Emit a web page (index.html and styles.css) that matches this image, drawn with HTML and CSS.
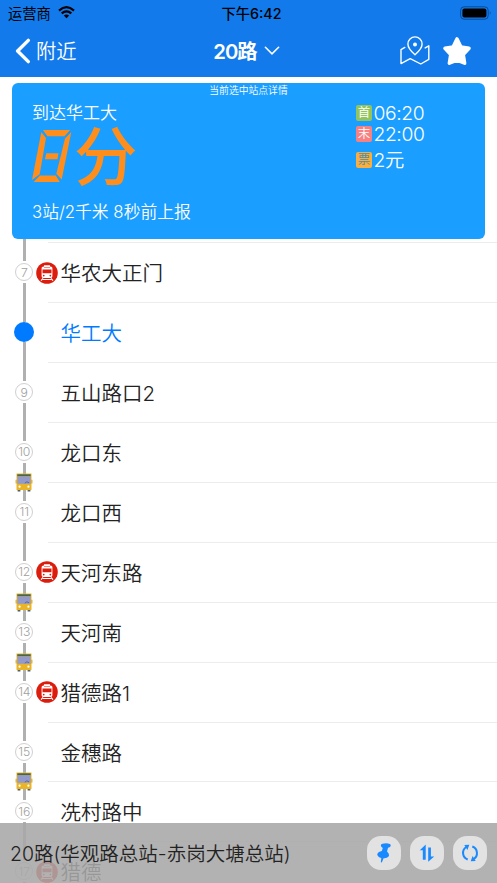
FILE: index.html
```html
<!DOCTYPE html>
<html lang="zh-CN">
<head>
<meta charset="utf-8">
<meta name="viewport" content="width=device-width, initial-scale=1">
<title>20路</title>
<link rel="stylesheet" href="styles.css">
</head>
<body>
<svg width="0" height="0" class="defs" aria-hidden="true">
  <symbol id="metro" viewBox="0 0 22 22">
    <circle cx="11" cy="11" r="10.8" fill="#dc1c0c"/>
    <path fill="#fff" fill-rule="evenodd" d="M8 3.2h6v1.3l1.400.3q1 .4 1 1.500v8q0 1.500-1.400 1.700H7q-1.400-.2-1.400-1.700v-8q0-1.100 1-1.500L8 4.500zM6.500 7.600v3.600h9V7.600zM8 5.400v.7h6v-.7zM7.700 12.800a.8.8 0 1 0 .1 0zM14.300 12.800a.8.8 0 1 0 .1 0z"/>
    <path d="M7 16.300 5 18.600M15 16.300l2 2.300M6.800 17.500h8.400" stroke="#fff" stroke-width="1.1"/>
  </symbol>
  <symbol id="bus" viewBox="0 0 18 19">
    <path fill="#555f68" d="M2.600 15.600h2.800v3H2.600zM12.600 15.600h2.800v3h-2.800z"/>
    <path fill="#e9b526" d="M1.500.5h15v6.300h1v3.600h-1v6.600h-15v-6.600h-1V6.800h1z"/>
    <path fill="#49664d" d="M2.300 1.300h13.400v2H2.300z"/>
    <path fill="#929acb" d="M2.300 3.300h13.400v7.500H2.300z"/>
    <path d="M9.800 10.200q2-2.700 4.200-.4" fill="none" stroke="#4a5795" stroke-width=".8"/>
    <circle cx="4.600" cy="13.700" r="1.100" fill="#fff"/><circle cx="13.400" cy="13.700" r="1.100" fill="#fff"/>
  </symbol>
</svg>
<div class="screen">
  <header class="top">
    <div class="status">
      <div class="carrier"><span>运营商</span>
        <svg width="17" height="13" viewBox="0 0 17 13"><path d="M1 4.600Q8.500-2.200 16 4.600M3.700 7.400q4.800-4.200 9.600 0" fill="none" stroke="#000" stroke-width="2.200"/><path d="M5.800 9.500q2.700-2.100 5.400 0L8.500 12.300z"/></svg>
      </div>
      <div class="clock">下午6:42</div>
      <div class="power"><svg width="32" height="14" viewBox="0 0 32 14"><rect x=".6" y=".8" width="27.600" height="12.400" rx="3.500" fill="none" stroke="#0b4a91"/><rect x="2.400" y="2.600" width="24" height="8.800" rx="2"/><path d="M29.800 5q1.800 2 0 4z" fill="#0b4a91"/></svg></div>
    </div>
    <nav class="nav">
      <div class="back"><svg width="16" height="26" viewBox="0 0 16 26"><path d="M13.300 2.400 2.600 13l10.700 10.600" fill="none" stroke="#fff" stroke-width="3.400" stroke-linecap="round" stroke-linejoin="round"/></svg><span class="label">附近</span></div>
      <div class="title"><span class="label"><span class="num">20</span>路</span><svg width="16" height="10" viewBox="0 0 16 10"><path d="m1.400 1.300 6.600 6.600 6.600-6.600" fill="none" stroke="#fff" stroke-width="1.600" stroke-linecap="round"/></svg></div>
      <div class="actions">
        <svg width="30" height="30" viewBox="0 0 30 30"><g fill="none" stroke="#fff" stroke-width="1.400" stroke-linejoin="round" stroke-linecap="round"><path d="M4.800 11.400 1 13.600v14l9.200-5 10.600 5.400 8-4.600V9.800l-3.600 2.100"/><path d="M15 18.800Q7.900 12.500 7.900 8a7.100 7.100 0 0 1 14.200 0q0 4.500-7.100 10.800z"/></g><circle cx="15" cy="8.500" r="2" fill="#fff"/></svg>
        <svg width="30" height="30" viewBox="0 0 30 30"><path d="m15 3 3.900 8 8.100 1.300-5.800 6.300 1.400 8.600L15 24.200l-7.600 3 1.400-8.600L3 12.300 11.100 11z" fill="#fff" stroke="#fff" stroke-width="3.600" stroke-linejoin="round"/></svg>
      </div>
    </nav>
  </header>

  <section class="card">
    <div class="caption">当前选中站点详情</div>
    <div class="arrival">
      <div class="dest">到达华工大</div>
      <div class="eta">
        <svg width="40" height="54" viewBox="0 0 40 54" role="img" aria-label="8"><g fill="#ff8e1c"><path d="M10.900 1h27.300l-5.700 6.300H15.400z"/><path d="M9.300 2.900 14 9 7.700 45.300 0 51z"/><path d="M39.300 3 33 9.500 24.300 44.700 29.700 50.500z"/><path d="M7.900 46.600h15.900l4 6.400H1.500z"/><path d="M14.300 24.200h12.200l-1 6H12.900z"/></g></svg>
        <span>分</span>
      </div>
      <div class="report">3站/2千米 8秒前上报</div>
    </div>
    <div class="facts">
      <div class="fact"><i class="tag first">首</i><span>06:20</span></div>
      <div class="fact"><i class="tag last">末</i><span>22:00</span></div>
      <div class="fact fare"><i class="tag ticket">票</i><span>2元</span></div>
    </div>
  </section>

  <ul class="stops">
    <li class="stop"><div class="rail"><b>7</b></div><div class="name"><svg class="metro"><use href="#metro"/></svg><span>华农大正门</span></div></li>
    <li class="stop current"><div class="rail"><b></b></div><div class="name"><span>华工大</span></div></li>
    <li class="stop"><div class="rail"><b>9</b></div><div class="name"><span>五山路口2</span></div></li>
    <li class="stop"><div class="rail"><b>10</b><svg class="bus"><use href="#bus"/></svg></div><div class="name"><span>龙口东</span></div></li>
    <li class="stop"><div class="rail"><b>11</b></div><div class="name"><span>龙口西</span></div></li>
    <li class="stop"><div class="rail"><b>12</b><svg class="bus"><use href="#bus"/></svg></div><div class="name"><svg class="metro"><use href="#metro"/></svg><span>天河东路</span></div></li>
    <li class="stop"><div class="rail"><b>13</b><svg class="bus"><use href="#bus"/></svg></div><div class="name"><span>天河南</span></div></li>
    <li class="stop"><div class="rail"><b>14</b></div><div class="name"><svg class="metro"><use href="#metro"/></svg><span>猎德路1</span></div></li>
    <li class="stop"><div class="rail"><b>15</b><svg class="bus"><use href="#bus"/></svg></div><div class="name"><span>金穗路</span></div></li>
    <li class="stop"><div class="rail"><b>16</b></div><div class="name"><span>冼村路中</span></div></li>
    <li class="stop"><div class="rail"><b>17</b></div><div class="name"><svg class="metro"><use href="#metro"/></svg><span>猎德</span></div></li>
  </ul>

  <footer class="bar">
    <div class="route">20路(华观路总站-赤岗大塘总站)</div>
    <div class="tools">
      <div class="tool"><svg width="18" height="20" viewBox="0 0 18 20"><path fill="#1989ff" d="M7.500.8q4-1.100 7.300.2 1.400.8.600 2.500-.5 1.100-2.400 1.300l-1 3.600q2.600 2 1.800 4.900-1.700 2.200-5.200 2l-1.800 4.200-1-.3.500-4.200Q2.500 14 2.200 11q1-2.500 4.600-3l1-3Q5.700 4 5.800 2.400q.2-1.200 1.700-1.600z"/></svg></div>
      <div class="tool"><svg width="16" height="18" viewBox="0 0 16 18"><path fill="#1989ff" d="M6.700.5v15.200H3.800V6.200H.8zM9.200 3.500h2.700v9h3.300L9.200 17.700z"/></svg></div>
      <div class="tool"><svg width="18" height="18" viewBox="0 0 18 18"><g fill="none" stroke="#1989ff" stroke-width="2"><path d="M6.700 15.500A7 7 0 0 1 5.300 3M11.300 2.500A7 7 0 0 1 12.700 15"/></g><path fill="#1989ff" d="m3.300.9 5-.2-1.900 5.200zM14.700 17.100l-5 .2 1.900-5.200z"/></svg></div>
    </div>
  </footer>
</div>
</body>
</html>
```
FILE: styles.css
```css
* { box-sizing: border-box; }
body {
  margin: 0;
  background: #fff;
  color: #222;
  font-family: Inter, "Noto Sans CJK SC", sans-serif;
  font-weight: 350;
}
.defs { position: absolute; }
svg { display: block; flex: none; }
.screen { position: relative; height: 883px; overflow: hidden; }

.top { height: 77px; background: #127aeb; color: #fff; }
.status {
  display: grid;
  grid-template-columns: 1fr auto 1fr;
  align-items: center;
  height: 25px;
  padding: 0 5px 0 8px;
  color: #000;
  font-size: 14.3px;
  font-weight: 400;
}
.carrier { display: flex; align-items: center; gap: 7px; }
.clock { font-weight: 500; padding-left: 3px; }
.power { justify-self: end; }
.nav {
  display: grid;
  grid-template-columns: 1fr auto 1fr;
  align-items: center;
  height: 52px;
  padding: 0 25px 0 15px;
  font-size: 20.3px;
}
.label { padding-bottom: 2px; }
.back { display: flex; align-items: center; gap: 5px; }
.title { display: flex; align-items: center; gap: 6px; padding-left: 6px; font-weight: 600; }
.num { letter-spacing: -1px; }
.actions { display: flex; justify-content: flex-end; gap: 12px; }

.card {
  position: relative;
  z-index: 1;
  display: grid;
  grid-template-columns: 324px 1fr;
  grid-template-rows: 15px 1fr;
  height: 156px;
  margin: 6px 12px 3.3px;
  padding: 0 0 0 20px;
  border-radius: 6px;
  background: #1a9eff;
  color: #fff;
}
.caption {
  grid-column: 1 / -1;
  margin-left: -20px;
  text-align: center;
  font-size: 9.8px;
  line-height: 15px;
}
.dest { margin-top: 4px; font-size: 17px; line-height: 22px; }
.eta { display: flex; height: 66px; color: #ff8e1c; }
.eta svg { margin-top: 5px; }
.eta span { margin-left: 2px; font-size: 63.5px; line-height: 66px; font-weight: 500; }
.report { margin-top: 11px; font-size: 16.8px; line-height: 22px; }
.facts { padding-top: 4px; font-size: 19.3px; line-height: 20px; letter-spacing: -0.4px; }
.fact { display: flex; align-items: center; gap: 1.5px; height: 21.5px; }
.fare { margin-top: 4.5px; }
.tag {
  width: 16px;
  height: 16px;
  border-radius: 2px;
  font-size: 12.5px;
  line-height: 16px;
  letter-spacing: 0;
  font-style: normal;
  text-align: center;
}
.first { background: #92c35c; }
.last { background: #f78182; }
.ticket { background: #fbad3e; color: #478fae; }

.stops { margin: 0; padding: 0; list-style: none; }
.stop { display: flex; height: 59.92px; }
.rail {
  position: relative;
  display: flex;
  flex-direction: column;
  align-items: center;
  width: 48.4px;
}
.rail::before, .rail::after { content: ""; flex: 1; width: 3px; background: #b0b0b0; }
.stop:first-child .rail::before { box-shadow: 0 -6px 0 #b0b0b0; }
.rail b {
  display: grid;
  place-items: center;
  width: 18px;
  height: 18px;
  margin: 2px 0;
  border: 1px solid #d0d0d0;
  border-radius: 50%;
  color: #a0a0a0;
  font-size: 12.2px;
  font-weight: 350;
  letter-spacing: -0.2px;
}
.current b { width: 20px; height: 20px; margin: 0; border: 0; background: #007aff; }
.current { color: #007aff; }
.bus {
  position: absolute;
  z-index: 1;
  left: 15.3px;
  bottom: -10px;
  width: 18px;
  height: 19px;
}
.name {
  display: flex;
  align-items: center;
  flex: 1;
  padding: 0 0 1px 12px;
  border-top: 1px solid #ececee;
  font-size: 20.5px;
}
.metro { width: 22px; height: 22px; margin: 1px 2px 0 -24px; }

.bar {
  position: absolute;
  z-index: 2;
  inset: auto 0 0;
  display: flex;
  align-items: center;
  justify-content: space-between;
  height: 60px;
  padding: 0 10px;
  background: rgba(167, 167, 167, .88);
}
.route { padding-bottom: 1px; font-size: 19.5px; white-space: nowrap; }
.tools { display: flex; gap: 9px; }
.tool {
  display: grid;
  place-items: center;
  width: 34px;
  height: 34px;
  border-radius: 14px;
  background: #e2e2e2;
}
```
